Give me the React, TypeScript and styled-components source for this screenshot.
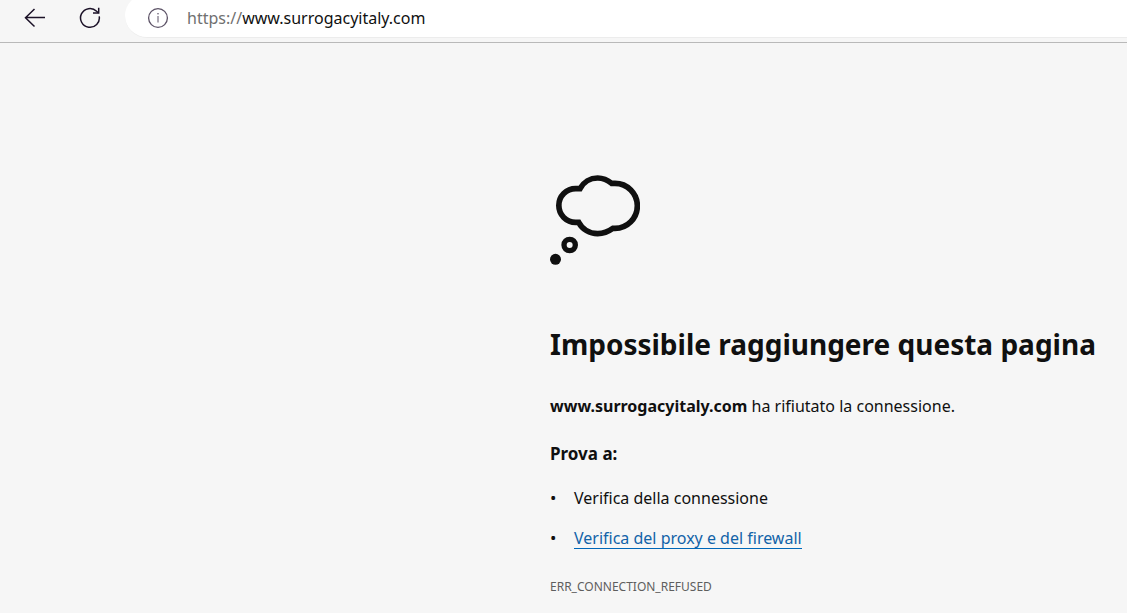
import React from 'react';
import styled, { createGlobalStyle } from 'styled-components';

const GlobalStyle = createGlobalStyle`
  * { box-sizing: border-box; }
  body {
    margin: 0;
    background: #f6f6f6;
    color: #101010;
    font-family: "Segoe UI", "Noto Sans", "Open Sans", sans-serif;
    font-size: 16px;
    line-height: 24px;
  }
`;

const Toolbar = styled.header`
  display: flex;
  align-items: flex-start;
  height: 43px;
  padding-left: 20px;
  overflow: hidden;
  border-bottom: 1px solid #b9b9b9;
`;

const IconButton = styled.button`
  display: flex;
  align-items: center;
  justify-content: center;
  width: 30px;
  height: 36px;
  margin-right: 25px;
  padding: 0;
  border: 0;
  background: none;
  color: #1c1228;
`;

const AddressBar = styled.div`
  display: flex;
  flex: 1;
  align-items: center;
  gap: 18px;
  height: 44px;
  margin-top: -6px;
  margin-left: -5px;
  padding: 4px 0 0 22px;
  border-bottom: 1px solid #ececec;
  border-radius: 22px 0 0 22px;
  background: #fff;
`;

const InfoButton = styled(IconButton)`
  width: 22px;
  margin: 0;
  color: #5c5266;
`;

const Url = styled.a`
  color: #101010;
  text-decoration: none;
  white-space: nowrap;
`;

const Scheme = styled.span`
  color: #707070;
`;

const Page = styled.main`
  display: grid;
  grid-template-columns: 1fr 577px;
  padding-top: 132px;
`;

const Message = styled.section`
  grid-column: 2;
`;

const Cloud = styled.svg`
  display: block;
  width: 90px;
  height: 90px;
`;

const Title = styled.h1`
  margin: 59px 0 0;
  font-size: 28px;
  line-height: 40px;
  font-weight: 700;
  white-space: nowrap;
`;

const Reason = styled.p`
  margin: 30px 0 0;
`;

const Subtitle = styled.h2`
  margin: 24px 0 0;
  font-size: 17px;
  line-height: 24px;
  font-weight: 700;
`;

const Suggestions = styled.ul`
  display: grid;
  gap: 16px;
  margin: 20px 0 0;
  padding: 0;
  list-style: none;
`;

const Suggestion = styled.li`
  display: flex;

  &::before {
    content: "•";
    width: 24px;
    font-size: 17px;
  }
`;

const HelpLink = styled.a`
  height: 23px;
  border-bottom: 1px solid #0067b8;
  color: #1263a8;
  text-decoration: none;
`;

const ErrorCode = styled.p`
  margin: 26px 0 0;
  color: #5e5e5e;
  font-size: 12px;
  line-height: 22px;
`;

export default function App() {
  return (
    <>
      <GlobalStyle />
      <Toolbar>
        <IconButton type="button" aria-label="Indietro">
          <svg width="22" height="20" viewBox="0 0 22 20" fill="none" stroke="currentColor" strokeWidth="1.5">
            <path d="M21 9.5H1.5M10.5 1L1.5 9.7L10.5 18.5" />
          </svg>
        </IconButton>
        <IconButton type="button" aria-label="Aggiorna">
          <svg width="22" height="22" viewBox="0 0 22 22" fill="none" stroke="currentColor" strokeWidth="1.5">
            <path d="M20.2 9.3A9.4 9.4 0 1 1 17.6 4.3L19.6 6" />
            <path d="M19.7 0.8V6H14" />
          </svg>
        </IconButton>
        <AddressBar>
          <InfoButton type="button" aria-label="Informazioni sul sito">
            <svg width="22" height="22" viewBox="0 0 22 22" fill="none" stroke="currentColor" strokeWidth="1.3">
              <circle cx="11" cy="11" r="9.4" />
              <path d="M11 9V15.5" strokeWidth="1" />
              <circle cx="11" cy="6.8" r="0.8" fill="currentColor" stroke="none" />
            </svg>
          </InfoButton>
          <Url href="#">
            <Scheme>https://</Scheme>www.surrogacyitaly.com
          </Url>
        </AddressBar>
      </Toolbar>
      <Page>
        <Message>
          <Cloud viewBox="45 30 270 270" fill="none" stroke="#101010" strokeWidth="17" aria-hidden="true">
            <path d="M135 71H122A50.5 50.5 0 0 0 122 172H131A64 64 0 0 0 188 206Q212 206 234 190H240A67 67.500 0 0 0 240 55H230Q211 39 188 39A60 60 0 0 0 135 71Z" />
            <circle cx="104" cy="240" r="17" strokeWidth="16" />
            <circle cx="61.500" cy="283" r="16.500" fill="#101010" stroke="none" />
          </Cloud>
          <Title>Impossibile raggiungere questa pagina</Title>
          <Reason>
            <strong>www.surrogacyitaly.com</strong> ha rifiutato la connessione.
          </Reason>
          <Subtitle>Prova a:</Subtitle>
          <Suggestions>
            <Suggestion>Verifica della connessione</Suggestion>
            <Suggestion>
              <HelpLink href="#">Verifica del proxy e del firewall</HelpLink>
            </Suggestion>
          </Suggestions>
          <ErrorCode>ERR_CONNECTION_REFUSED</ErrorCode>
        </Message>
      </Page>
    </>
  );
}
